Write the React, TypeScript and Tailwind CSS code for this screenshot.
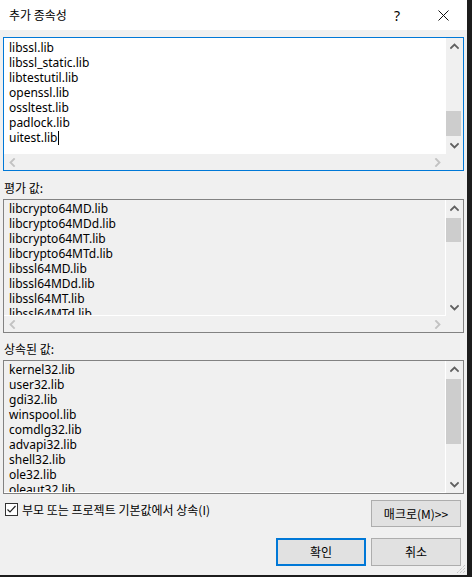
import React from "react";

/* ---------- small drawings ---------- */
function Chevron({ dir, color = "#606060" }: { dir: "up" | "down" | "left" | "right"; color?: string }) {
  const d = {
    up: "M1 6 L4.5 2.5 L8 6",
    down: "M1 3 L4.5 6.5 L8 3",
    left: "M6 1 L2.5 4.5 L6 8",
    right: "M3 1 L6.5 4.5 L3 8",
  }[dir];
  return (
    <svg width="9" height="9" viewBox="0 0 9 9">
      <path d={d} fill="none" stroke={color} strokeWidth="1.8" strokeLinecap="square" />
    </svg>
  );
}

type BoxProps = {
  lines: string[];
  active?: boolean;
  hscroll?: boolean;
  thumbTop: string;
  thumbH: string;
  cursor?: boolean;
};

/* ---------- list / edit box ---------- */
function ListBox({ lines, active, hscroll, thumbTop, thumbH, cursor }: BoxProps) {
  const arrow = active ? "#606060" : "#606060";
  const disabledArrow = active ? "#c2c2c2" : "#c2c2c2";
  return (
    <div
      className={
        "mx-[3px] h-[134px] border flex flex-col " +
        (active ? "border-[#0078d7]" : "border-[#828282]")
      }
    >
      <div className="flex flex-1 min-h-0">
        <div
          className={
            "flex-1 min-w-0 overflow-hidden pl-[5px] leading-[15px] text-[12px] text-black " +
            (active
              ? "bg-white pt-[2px]"
              : "bg-[#f0f0f0] pt-[1px] border-r border-white " + (hscroll ? "border-b" : "border-b"))
          }
        >
          {lines.map((l, i) => (
            <div key={i} className="h-[15px] whitespace-nowrap flex items-center">
              {l}
              {cursor && i === lines.length - 1 && (
                <span className="inline-block w-px h-[14px] bg-black ml-px" />
              )}
            </div>
          ))}
        </div>
        <div className="w-[17px] flex flex-col bg-[#f0f0f0]">
          <div className="h-[17px] flex items-center justify-center">
            <Chevron dir="up" color={arrow} />
          </div>
          <div className="flex-1">
            <div className="w-[15px] bg-[#cdcdcd]" style={{ marginTop: thumbTop, height: thumbH }} />
          </div>
          <div className="h-[17px] flex items-center justify-center">
            <Chevron dir="down" color={arrow} />
          </div>
        </div>
      </div>
      {hscroll && (
        <div className="h-[16px] flex bg-[#f0f0f0]">
          <div className="flex-1 flex justify-between items-center">
            <div className="w-[17px] flex justify-center">
              <Chevron dir="left" color={disabledArrow} />
            </div>
            <div className="w-[17px] flex justify-center">
              <Chevron dir="right" color={disabledArrow} />
            </div>
          </div>
          <div className="w-[17px]" />
        </div>
      )}
    </div>
  );
}

const top = ["libssl.lib", "libssl_static.lib", "libtestutil.lib", "openssl.lib", "ossltest.lib", "padlock.lib", "uitest.lib"];
const evaluated = [
  "libcrypto64MD.lib",
  "libcrypto64MDd.lib",
  "libcrypto64MT.lib",
  "libcrypto64MTd.lib",
  "libssl64MD.lib",
  "libssl64MDd.lib",
  "libssl64MT.lib",
  "libssl64MTd.lib",
];
const inherited = [
  "kernel32.lib",
  "user32.lib",
  "gdi32.lib",
  "winspool.lib",
  "comdlg32.lib",
  "advapi32.lib",
  "shell32.lib",
  "ole32.lib",
  "oleaut32.lib",
];

export default function App() {
  return (
    <div className="w-[472px] h-[577px] bg-[#1c1c1c] flex flex-col font-['Noto_Sans','Noto_Sans_CJK_KR',sans-serif] text-[12px] text-black">
      <div className="w-[467px] h-[575px] bg-[#f0f0f0] flex flex-col relative">
        {/* TITLE BAR */}
        <div className="h-[30px] bg-white flex items-center shrink-0">
          <span className="pl-[9px] text-[12px] font-['Noto_Sans_CJK_KR',sans-serif]">추가 종속성</span>
          <div className="ml-auto flex items-center h-full">
            <div className="w-[46px] h-full flex items-center justify-center text-[14px] font-['Noto_Sans',sans-serif]">
              ?
            </div>
            <div className="w-[46px] h-full flex items-center justify-center mr-[1px]">
              <svg width="11" height="11" viewBox="0 0 11 11">
                <path d="M0.5 0.5 L10.5 10.5 M10.5 0.5 L0.5 10.5" stroke="#111" strokeWidth="1" />
              </svg>
            </div>
          </div>
        </div>

        <div className="h-[7px]" />
        <ListBox lines={top} active hscroll thumbTop="56px" thumbH="25px" cursor />

        <div className="h-[28px] pt-[9px] pl-[4px] leading-[15px] font-['Noto_Sans_CJK_KR',sans-serif]">평가 값:</div>
        <ListBox lines={evaluated} hscroll thumbTop="1px" thumbH="24px" />

        <div className="h-[27px] pt-[8px] pl-[4px] leading-[15px] font-['Noto_Sans_CJK_KR',sans-serif]">상속된 값:</div>
        <ListBox lines={inherited} thumbTop="1px" thumbH="65px" />

        {/* CHECKBOX + MACRO */}
        <div className="mt-[6px] flex justify-between items-start pl-[5px] pr-[6px]">
          <div className="flex items-center gap-[4px] mt-[2px]">
            <div className="w-[13px] h-[13px] border border-[#333] bg-white flex items-center justify-center">
              <svg width="11" height="11" viewBox="0 0 11 11">
                <path d="M1.5 5.5 L4 8 L9.5 2" fill="none" stroke="#222" strokeWidth="1.2" />
              </svg>
            </div>
            <span className="leading-[15px] font-['Noto_Sans_CJK_KR',sans-serif]">
              부모 또는 프로젝트 기본값에서 상속(I)
            </span>
          </div>
          <button className="w-[90px] h-[27px] bg-[#e1e1e1] border border-[#adadad] flex items-center justify-center font-['Noto_Sans_CJK_KR',sans-serif]">
            매크로(M)&gt;&gt;
          </button>
        </div>

        {/* OK / CANCEL */}
        <div className="mt-[11px] flex justify-end gap-[5px] pr-[6px]">
          <button className="w-[90px] h-[28px] bg-[#e1e1e1] border-2 border-[#0078d7] flex items-center justify-center font-['Noto_Sans_CJK_KR',sans-serif]">
            확인
          </button>
          <button className="w-[90px] h-[28px] bg-[#e1e1e1] border border-[#adadad] flex items-center justify-center font-['Noto_Sans_CJK_KR',sans-serif]">
            취소
          </button>
        </div>

        {/* resize grip */}
        <svg className="absolute right-[1px] bottom-[1px]" width="11" height="11" viewBox="0 0 11 11">
          <path d="M10 2 L2 10 M10 5 L5 10 M10 8 L8 10" stroke="#b0b0b0" strokeWidth="1" strokeDasharray="1 1" />
        </svg>
      </div>
    </div>
  );
}
